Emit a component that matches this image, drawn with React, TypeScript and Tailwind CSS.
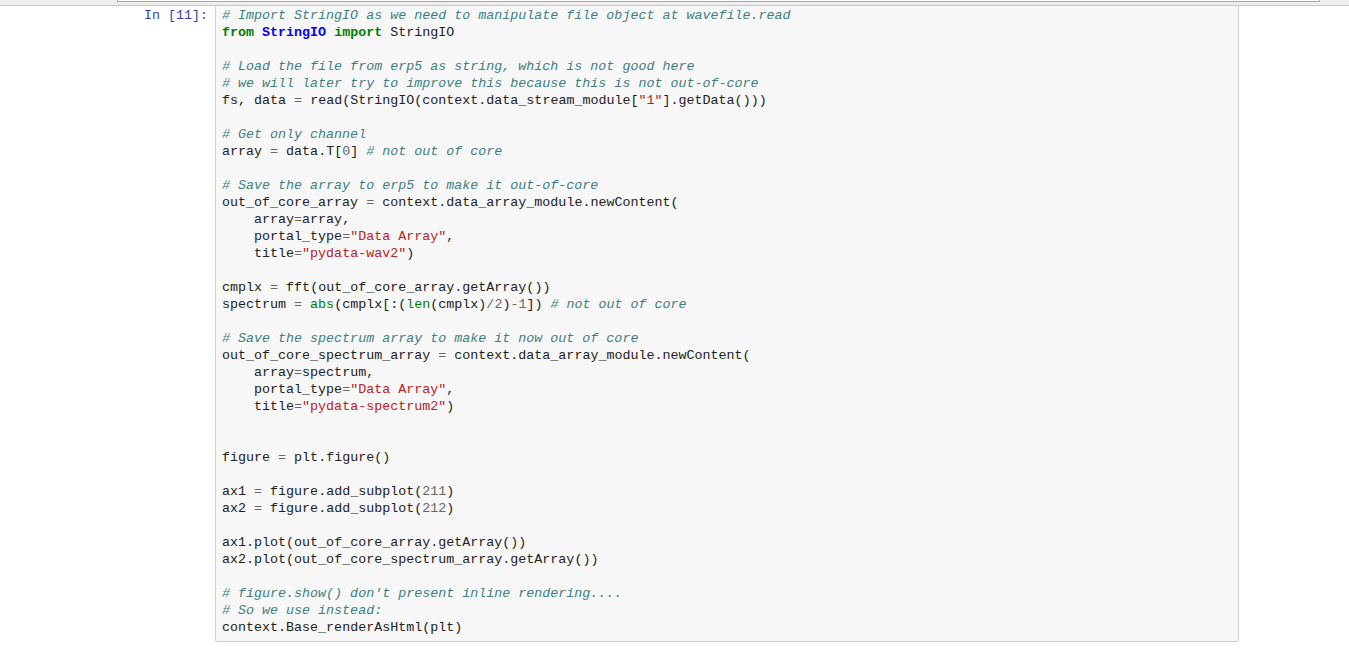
const code = `# Import StringIO as we need to manipulate file object at wavefile.read
from StringIO import StringIO

# Load the file from erp5 as string, which is not good here
# we will later try to improve this because this is not out-of-core
fs, data = read(StringIO(context.data_stream_module["1"].getData()))

# Get only channel
array = data.T[0] # not out of core

# Save the array to erp5 to make it out-of-core
out_of_core_array = context.data_array_module.newContent(
    array=array,
    portal_type="Data Array",
    title="pydata-wav2")

cmplx = fft(out_of_core_array.getArray())
spectrum = abs(cmplx[:(len(cmplx)/2)-1]) # not out of core

# Save the spectrum array to make it now out of core
out_of_core_spectrum_array = context.data_array_module.newContent(
    array=spectrum,
    portal_type="Data Array",
    title="pydata-spectrum2")


figure = plt.figure()

ax1 = figure.add_subplot(211)
ax2 = figure.add_subplot(212)

ax1.plot(out_of_core_array.getArray())
ax2.plot(out_of_core_spectrum_array.getArray())

# figure.show() don't present inline rendering....
# So we use instead:
context.Base_renderAsHtml(plt)`;

const TOKEN = /(#.*$)|("[^"]*")|(\b\d+\b)|([=\/\-+*])|(\b(?:from|import)\b)|(\b(?:abs|len)\b)|(\w+|\s+|.)/g;

function Line({ text }: { text: string }) {
  if (!text) return <div className="h-[17px]">&nbsp;</div>;
  const parts: React.ReactNode[] = [];
  let prev = "";
  let m: RegExpExecArray | null;
  let i = 0;
  TOKEN.lastIndex = 0;
  while ((m = TOKEN.exec(text)) !== null) {
    const t = m[0];
    let cls = "";
    if (m[1]) cls = "italic text-[#408080]";
    else if (m[2]) cls = "text-[#BA2121]";
    else if (m[3] || m[4]) cls = "text-[#666666]";
    else if (m[5]) cls = "font-bold text-[#008000]";
    else if (m[6]) cls = "text-[#008000]";
    else if (prev === "from" && /\w/.test(t)) cls = "font-bold text-[#0000FF]";
    parts.push(
      <span key={i++} className={cls}>
        {t}
      </span>
    );
    if (t.trim()) prev = t;
  }
  return <div className="h-[17px] whitespace-pre">{parts}</div>;
}

export default function App() {
  const lines = code.split("\n");
  return (
    <div className="min-h-[651px] bg-white font-['Liberation_Mono',monospace] text-[13.35px] leading-[17px] text-[#212121]">
      {/* toolbar edge */}
      <div className="h-[6px] bg-[#eeeeee] border-b border-[#c6c6c6]">
        <div className="ml-[117px] w-[1203px] h-[2px] bg-white border-x border-b border-[#a8a8a8]" />
      </div>

      {/* input cell */}
      <div className="flex">
        <div className="w-[215px] pr-[7px] pt-[1px] text-right text-[#303F9F] whitespace-pre">In [11]:</div>
        <div className="w-[1024px] bg-[#f7f7f7] border-x border-b border-[#cfcfcf] rounded-b-[2px] pl-[6px] pt-[1px] pb-[5px]">
          {lines.map((l, idx) => (
            <Line key={idx} text={l} />
          ))}
        </div>
      </div>
    </div>
  );
}
